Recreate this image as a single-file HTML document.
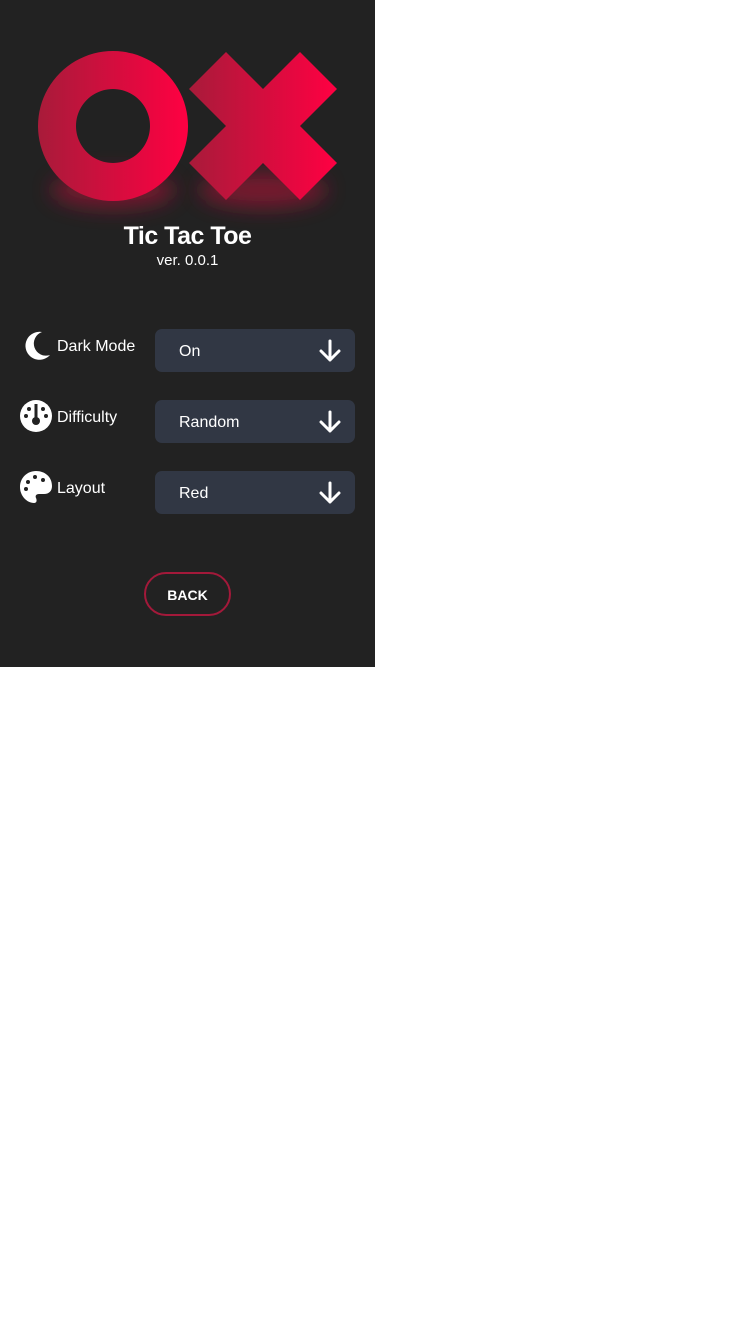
<!DOCTYPE html>
<html><head><style>
body{margin:0;width:750px;height:1334px;background:#fff;font-family:"Liberation Sans",sans-serif;}
#p{position:absolute;left:0;top:0;width:375px;height:667px;background:#222;overflow:hidden;color:#fff}
.t{position:absolute;left:0;width:375px;text-align:center}
.lab{position:absolute;left:57px;font-size:16px}
.box{position:absolute;left:155px;width:200px;height:43px;background:#313744;border-radius:7px}
.box span{position:absolute;left:24px;top:14px;font-size:16px}
.box svg{position:absolute;right:14px;top:10px}
.ic{position:absolute;left:20px}
</style></head><body><div id="p">
<svg width="375" height="260" style="position:absolute;left:0;top:0">
<defs>
<linearGradient id="g" x1="0" x2="1"><stop offset="0" stop-color="#a81b3a"/><stop offset="1" stop-color="#ff0042"/></linearGradient>
<filter id="b" x="-50%" y="-100%" width="200%" height="300%"><feGaussianBlur stdDeviation="10"/></filter>
</defs>
<ellipse cx="113" cy="190" rx="62" ry="18" fill="#9a1535" filter="url(#b)" opacity=".7"/>
<ellipse cx="263" cy="190" rx="64" ry="18" fill="#9a1535" filter="url(#b)" opacity=".7"/>
<path d="M113 51a75 75 0 1 0 0.01 0ZM113 89a37 37 0 1 1 -0.01 0Z" fill="url(#g)" fill-rule="evenodd"/>
<polygon points="226,52 263,89 300,52 337,89 300,126 337,163 300,200 263,163 226,200 189,163 226,126 189,89" fill="url(#g)"/>
</svg>
<div class="t" style="top:222px;font-size:25px;font-weight:bold;letter-spacing:-0.5px">Tic Tac Toe</div>
<div class="t" style="top:252px;font-size:15px">ver. 0.0.1</div>

<svg class="ic" style="top:330px" width="32" height="30" viewBox="0 0 32 30"><path d="M22 2A14 14 0 1 0 30 25 12 12 0 0 1 22 2Z" fill="#fff"/></svg>
<div class="lab" style="top:338px">Dark Mode</div>
<div class="box" style="top:329px"><span>On</span><svg width="22" height="24"><path d="M11 2V21M2 12L11 21L20 12" stroke="#fff" stroke-width="3" fill="none" stroke-linecap="round" stroke-linejoin="round"/></svg></div>

<svg class="ic" style="top:400px" width="32" height="32" viewBox="0 0 32 32"><circle cx="16" cy="16" r="16" fill="#fff"/><rect x="14.5" y="4" width="3" height="14" fill="#222"/><circle cx="16" cy="21" r="4" fill="#222"/><circle cx="9" cy="9" r="2" fill="#222"/><circle cx="23" cy="9" r="2" fill="#222"/><circle cx="6" cy="16" r="2" fill="#222"/><circle cx="26" cy="16" r="2" fill="#222"/></svg>
<div class="lab" style="top:409px">Difficulty</div>
<div class="box" style="top:400px"><span>Random</span><svg width="22" height="24"><path d="M11 2V21M2 12L11 21L20 12" stroke="#fff" stroke-width="3" fill="none" stroke-linecap="round" stroke-linejoin="round"/></svg></div>

<svg class="ic" style="top:471px" width="32" height="32" viewBox="0 0 32 32"><path d="M16 0C7 0 0 7 0 16s7 16 14 16c3 0 3-3 2-5-1-2 0-4 3-4h5c5 0 8-3 8-8C32 6 25 0 16 0Z" fill="#fff"/><circle cx="8" cy="11" r="2" fill="#222"/><circle cx="15" cy="6" r="2" fill="#222"/><circle cx="23" cy="9" r="2" fill="#222"/><circle cx="6" cy="18" r="2" fill="#222"/></svg>
<div class="lab" style="top:480px">Layout</div>
<div class="box" style="top:471px"><span>Red</span><svg width="22" height="24"><path d="M11 2V21M2 12L11 21L20 12" stroke="#fff" stroke-width="3" fill="none" stroke-linecap="round" stroke-linejoin="round"/></svg></div>

<div style="position:absolute;left:144px;top:572px;width:83px;height:40px;border:2px solid #a3193a;border-radius:22px;text-align:center;line-height:42px;font-size:14px;font-weight:bold">BACK</div>
</div></body></html>
